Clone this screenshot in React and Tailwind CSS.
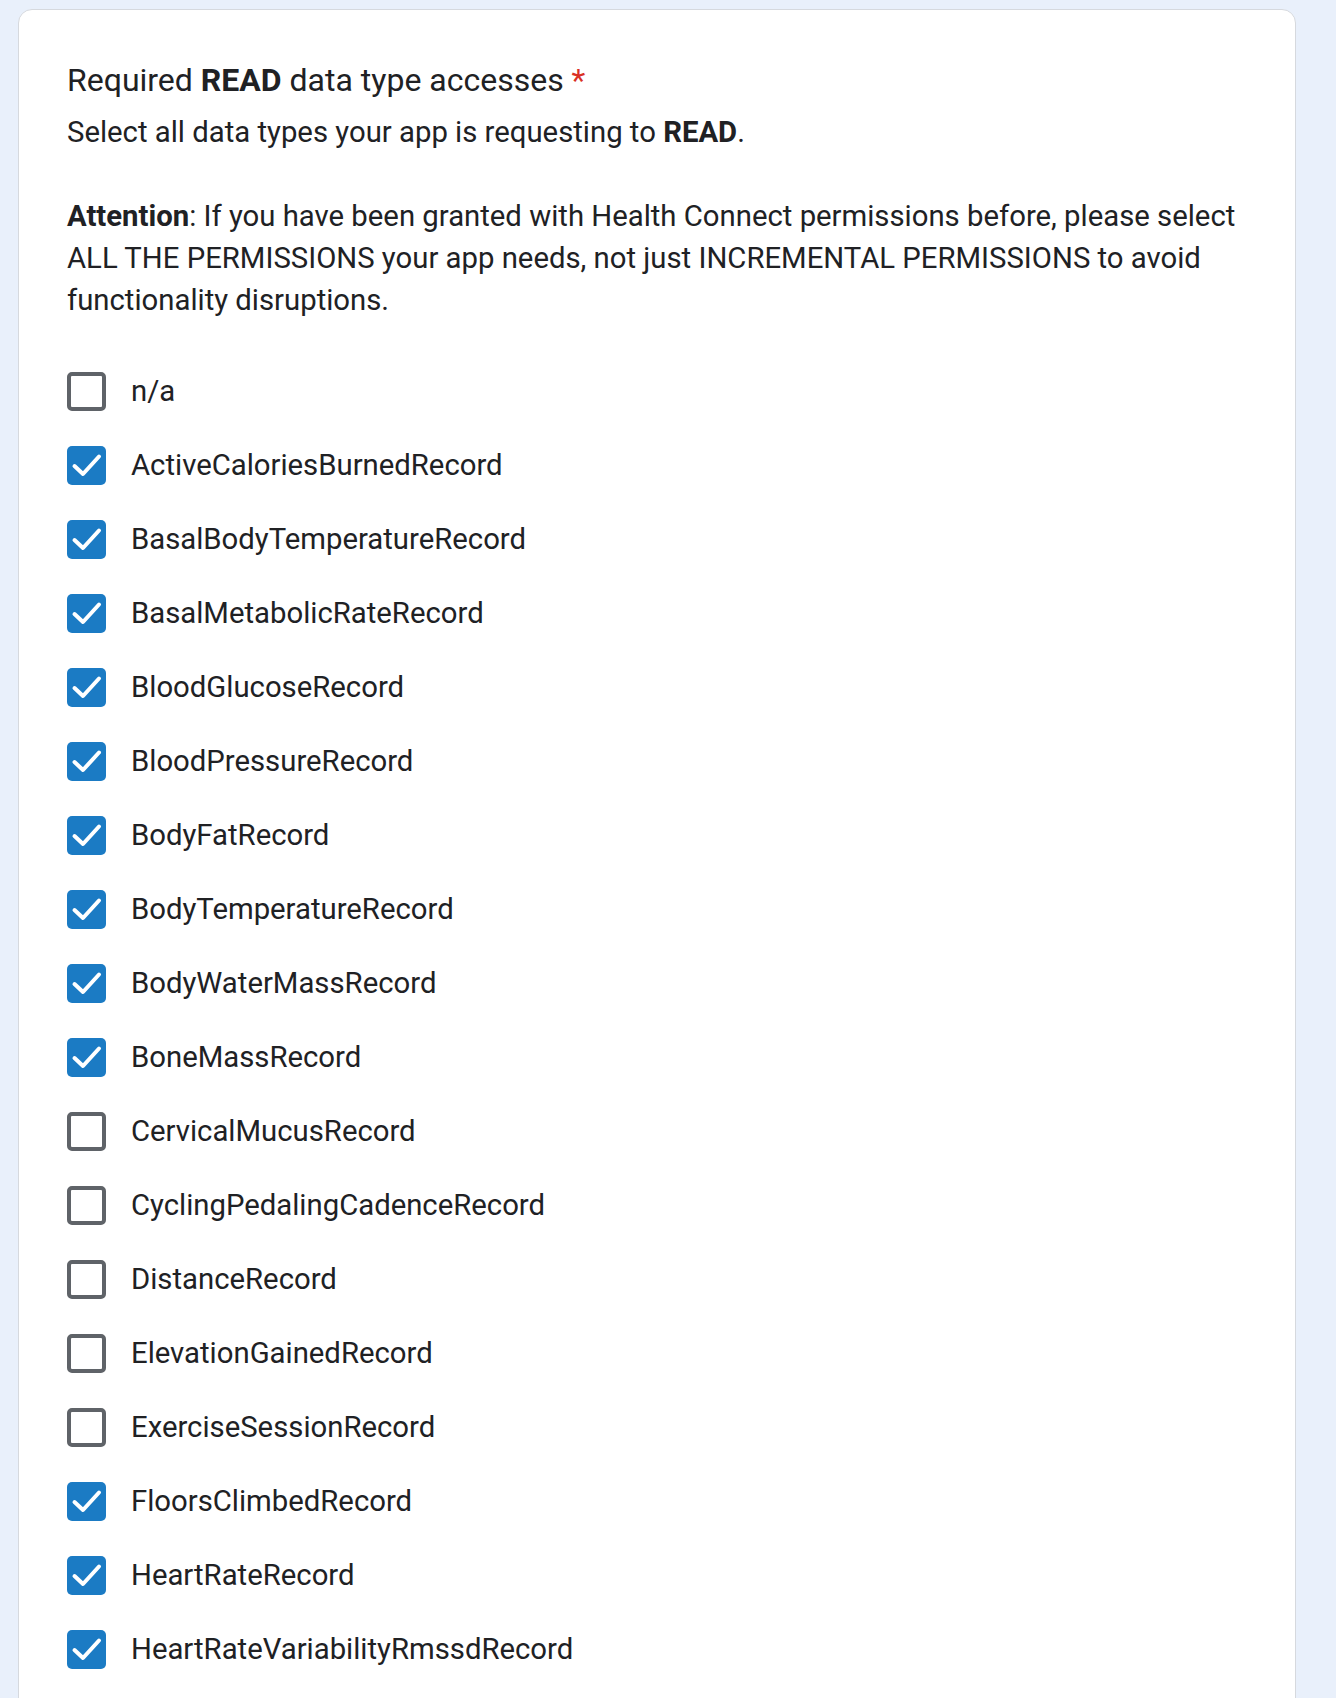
import React from 'react'

const items = [
  { label: 'n/a', checked: false },
  { label: 'ActiveCaloriesBurnedRecord', checked: true },
  { label: 'BasalBodyTemperatureRecord', checked: true },
  { label: 'BasalMetabolicRateRecord', checked: true },
  { label: 'BloodGlucoseRecord', checked: true },
  { label: 'BloodPressureRecord', checked: true },
  { label: 'BodyFatRecord', checked: true },
  { label: 'BodyTemperatureRecord', checked: true },
  { label: 'BodyWaterMassRecord', checked: true },
  { label: 'BoneMassRecord', checked: true },
  { label: 'CervicalMucusRecord', checked: false },
  { label: 'CyclingPedalingCadenceRecord', checked: false },
  { label: 'DistanceRecord', checked: false },
  { label: 'ElevationGainedRecord', checked: false },
  { label: 'ExerciseSessionRecord', checked: false },
  { label: 'FloorsClimbedRecord', checked: true },
  { label: 'HeartRateRecord', checked: true },
  { label: 'HeartRateVariabilityRmssdRecord', checked: true },
]

const Checkbox = ({ checked }) => {
  if (checked) {
    return (
      <div className="w-[39px] h-[39px] rounded-[5px] bg-[#1b7bc4] flex items-center justify-center shrink-0">
        <svg width="39" height="39" viewBox="0 0 39 39" fill="none">
          <polyline points="7.5,20 16,28 32,10.5" stroke="white" strokeWidth="4" strokeLinecap="round" strokeLinejoin="round" />
        </svg>
      </div>
    )
  }
  return <div className="w-[39px] h-[39px] rounded-[5px] border-[4px] border-[#5f6368] bg-white shrink-0" />
}

export default function App() {
  return (
    <div className="min-h-screen bg-[#e9f0fb] pt-[9px] pl-[18px] pr-[40px] font-['Roboto',sans-serif] text-[#202124]">
      <div className="w-[1278px] bg-white border border-[#d6d9de] rounded-[14px] pt-[50px] px-[48px] pb-[120px]">
        <h2 className="text-[32px] leading-[40px]">
          Required <span className="font-bold">READ</span> data type accesses <span className="text-[#d93025]">*</span>
        </h2>
        <p className="mt-[11px] text-[29.3px] leading-[42px]">
          Select all data types your app is requesting to <span className="font-bold">READ</span>.
        </p>
        <p className="mt-[42px] text-[29.3px] leading-[42px]">
          <span className="font-bold">Attention</span>: If you have been granted with Health Connect permissions before, please select
          <br />
          ALL THE PERMISSIONS your app needs, not just INCREMENTAL PERMISSIONS to avoid
          <br />
          functionality disruptions.
        </p>
        <div className="mt-[33px] flex flex-col">
          {items.map((item) => (
            <label key={item.label} className="h-[74px] flex items-center gap-[25px]">
              <Checkbox checked={item.checked} />
              <span className="text-[29.3px] leading-[40px]">{item.label}</span>
            </label>
          ))}
        </div>
      </div>
    </div>
  )
}
